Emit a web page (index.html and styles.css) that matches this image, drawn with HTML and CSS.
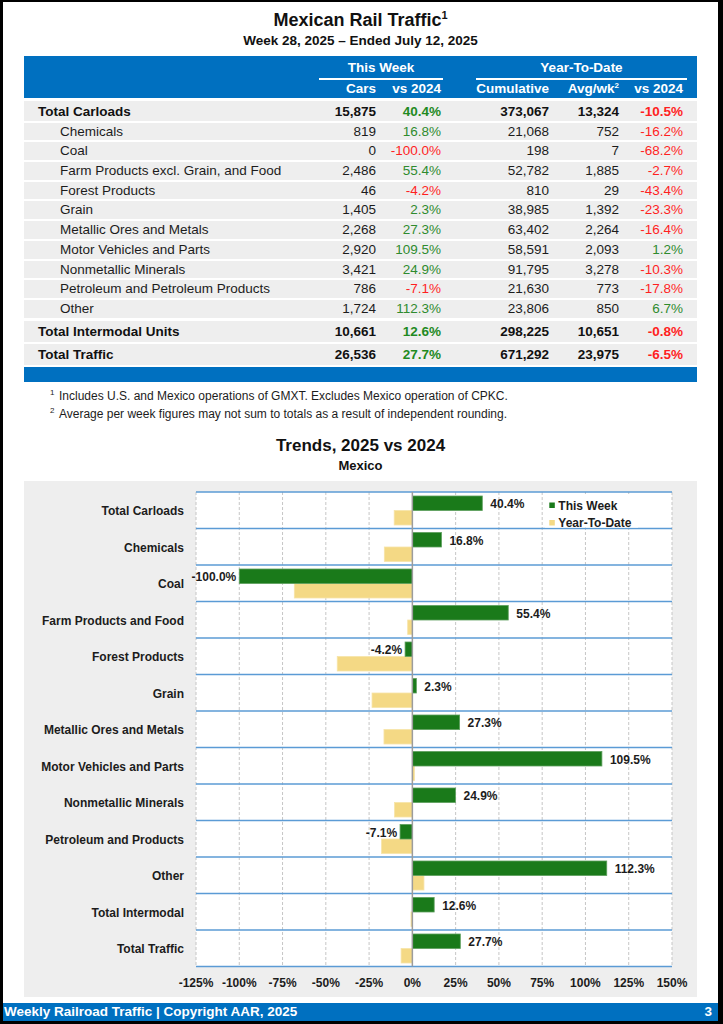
FILE: index.html
```html
<!DOCTYPE html>
<html lang="en">
<head>
<meta charset="utf-8">
<title>Mexican Rail Traffic</title>
<link rel="stylesheet" href="styles.css">
</head>
<body>
<div class="page">
  <h1 class="title">Mexican Rail Traffic<sup>1</sup></h1>
  <div class="subtitle">Week 28, 2025 – Ended July 12, 2025</div>

  <div class="tbl">
    <div class="thead">
      <div></div>
      <div class="grp tw">This Week</div>
      <div class="grp ytd">Year-To-Date</div>
      <div></div>
      <div class="hc">Cars</div>
      <div class="hc">vs 2024</div>
      <div class="hc">Cumulative</div>
      <div class="hc">Avg/wk<sup>2</sup></div>
      <div class="hc">vs 2024</div>
    </div>
    <div class="tbody">
      <div class="row total first"><div class="lbl">Total Carloads</div><div>15,875</div><div class="pos">40.4%</div><div>373,067</div><div>13,324</div><div class="neg">-10.5%</div></div>
      <div class="row sub"><div class="lbl">Chemicals</div><div>819</div><div class="pos">16.8%</div><div>21,068</div><div>752</div><div class="neg">-16.2%</div></div>
      <div class="row sub"><div class="lbl">Coal</div><div>0</div><div class="neg">-100.0%</div><div>198</div><div>7</div><div class="neg">-68.2%</div></div>
      <div class="row sub"><div class="lbl">Farm Products excl. Grain, and Food</div><div>2,486</div><div class="pos">55.4%</div><div>52,782</div><div>1,885</div><div class="neg">-2.7%</div></div>
      <div class="row sub"><div class="lbl">Forest Products</div><div>46</div><div class="neg">-4.2%</div><div>810</div><div>29</div><div class="neg">-43.4%</div></div>
      <div class="row sub"><div class="lbl">Grain</div><div>1,405</div><div class="pos">2.3%</div><div>38,985</div><div>1,392</div><div class="neg">-23.3%</div></div>
      <div class="row sub"><div class="lbl">Metallic Ores and Metals</div><div>2,268</div><div class="pos">27.3%</div><div>63,402</div><div>2,264</div><div class="neg">-16.4%</div></div>
      <div class="row sub"><div class="lbl">Motor Vehicles and Parts</div><div>2,920</div><div class="pos">109.5%</div><div>58,591</div><div>2,093</div><div class="pos">1.2%</div></div>
      <div class="row sub"><div class="lbl">Nonmetallic Minerals</div><div>3,421</div><div class="pos">24.9%</div><div>91,795</div><div>3,278</div><div class="neg">-10.3%</div></div>
      <div class="row sub"><div class="lbl">Petroleum and Petroleum Products</div><div>786</div><div class="neg">-7.1%</div><div>21,630</div><div>773</div><div class="neg">-17.8%</div></div>
      <div class="row sub"><div class="lbl">Other</div><div>1,724</div><div class="pos">112.3%</div><div>23,806</div><div>850</div><div class="pos">6.7%</div></div>
      <div class="row total big inter"><div class="lbl">Total Intermodal Units</div><div>10,661</div><div class="pos">12.6%</div><div>298,225</div><div>10,651</div><div class="neg">-0.8%</div></div>
      <div class="row total big"><div class="lbl">Total Traffic</div><div>26,536</div><div class="pos">27.7%</div><div>671,292</div><div>23,975</div><div class="neg">-6.5%</div></div>
    </div>
    <div class="tfoot"></div>
  </div>

  <div class="notes">
    <p><sup>1</sup>Includes U.S. and Mexico operations of GMXT. Excludes Mexico operation of CPKC.</p>
    <p><sup>2</sup>Average per week figures may not sum to totals as a result of independent rounding.</p>
  </div>

  <h2 class="ctitle">Trends, 2025 vs 2024</h2>
  <div class="csub">Mexico</div>

  <div class="chart">
    <svg width="673" height="516" viewBox="0 0 673 516">
      <rect class="plot" x="172" y="11" width="476" height="474.5"/>
      <g class="grid">
        <line x1="172" y1="11" x2="172" y2="485.5"/>
        <line x1="215.27" y1="11" x2="215.27" y2="485.5"/>
        <line x1="258.55" y1="11" x2="258.55" y2="485.5"/>
        <line x1="301.82" y1="11" x2="301.82" y2="485.5"/>
        <line x1="345.09" y1="11" x2="345.09" y2="485.5"/>
        <line x1="431.64" y1="11" x2="431.64" y2="485.5"/>
        <line x1="474.91" y1="11" x2="474.91" y2="485.5"/>
        <line x1="518.18" y1="11" x2="518.18" y2="485.5"/>
        <line x1="561.45" y1="11" x2="561.45" y2="485.5"/>
        <line x1="604.73" y1="11" x2="604.73" y2="485.5"/>
        <line x1="648" y1="11" x2="648" y2="485.5"/>
      </g>
      <g class="bands">
        <line x1="172" y1="11" x2="648" y2="11"/>
        <line x1="172" y1="47.5" x2="648" y2="47.5"/>
        <line x1="172" y1="84" x2="648" y2="84"/>
        <line x1="172" y1="120.5" x2="648" y2="120.5"/>
        <line x1="172" y1="157" x2="648" y2="157"/>
        <line x1="172" y1="193.5" x2="648" y2="193.5"/>
        <line x1="172" y1="230" x2="648" y2="230"/>
        <line x1="172" y1="266.5" x2="648" y2="266.5"/>
        <line x1="172" y1="303" x2="648" y2="303"/>
        <line x1="172" y1="339.5" x2="648" y2="339.5"/>
        <line x1="172" y1="376" x2="648" y2="376"/>
        <line x1="172" y1="412.5" x2="648" y2="412.5"/>
        <line x1="172" y1="449" x2="648" y2="449"/>
        <line x1="172" y1="485.5" x2="648" y2="485.5"/>
      </g>
      <g class="ytdbar">
        <rect x="370.19" y="29.5" width="18.17" height="14.5"/>
        <rect x="360.32" y="66" width="28.04" height="14.5"/>
        <rect x="270.31" y="102.5" width="118.05" height="14.5"/>
        <rect x="383.69" y="139" width="4.67" height="14.5"/>
        <rect x="313.24" y="175.5" width="75.12" height="14.5"/>
        <rect x="348.03" y="212" width="40.33" height="14.5"/>
        <rect x="359.97" y="248.5" width="28.39" height="14.5"/>
        <rect x="388.36" y="285" width="2.08" height="14.5"/>
        <rect x="370.53" y="321.5" width="17.83" height="14.5"/>
        <rect x="357.55" y="358" width="30.81" height="14.5"/>
        <rect x="388.36" y="394.5" width="11.6" height="14.5"/>
        <rect x="386.98" y="431" width="1.38" height="14.5"/>
        <rect x="377.11" y="467.5" width="11.25" height="14.5"/>
      </g>
      <g class="twbar">
        <rect x="388.36" y="15" width="69.93" height="14.5"/>
        <rect x="388.36" y="51.5" width="29.08" height="14.5"/>
        <rect x="215.27" y="88" width="173.09" height="14.5"/>
        <rect x="388.36" y="124.5" width="95.89" height="14.5"/>
        <rect x="381.09" y="161" width="7.27" height="14.5"/>
        <rect x="388.36" y="197.5" width="3.98" height="14.5"/>
        <rect x="388.36" y="234" width="47.25" height="14.5"/>
        <rect x="388.36" y="270.5" width="189.53" height="14.5"/>
        <rect x="388.36" y="307" width="43.1" height="14.5"/>
        <rect x="376.07" y="343.5" width="12.29" height="14.5"/>
        <rect x="388.36" y="380" width="194.38" height="14.5"/>
        <rect x="388.36" y="416.5" width="21.81" height="14.5"/>
        <rect x="388.36" y="453" width="47.95" height="14.5"/>
      </g>
      <line class="zero" x1="388.36" y1="11" x2="388.36" y2="485.5"/>
      <g class="vals">
        <text x="466.3" y="27.45">40.4%</text>
        <text x="425.4" y="63.95">16.8%</text>
        <text class="end" x="212.3" y="100.45">-100.0%</text>
        <text x="492.3" y="136.95">55.4%</text>
        <text class="end" x="378.1" y="173.45">-4.2%</text>
        <text x="400.3" y="209.95">2.3%</text>
        <text x="443.6" y="246.45">27.3%</text>
        <text x="585.9" y="282.95">109.5%</text>
        <text x="439.5" y="319.45">24.9%</text>
        <text class="end" x="373.1" y="355.95">-7.1%</text>
        <text x="590.7" y="392.45">112.3%</text>
        <text x="418.2" y="428.95">12.6%</text>
        <text x="444.3" y="465.45">27.7%</text>
      </g>
      <g class="cats">
        <text x="160" y="34.05">Total Carloads</text>
        <text x="160" y="70.55">Chemicals</text>
        <text x="160" y="107.05">Coal</text>
        <text x="160" y="143.55">Farm Products and Food</text>
        <text x="160" y="180.05">Forest Products</text>
        <text x="160" y="216.55">Grain</text>
        <text x="160" y="253.05">Metallic Ores and Metals</text>
        <text x="160" y="289.55">Motor Vehicles and Parts</text>
        <text x="160" y="326.05">Nonmetallic Minerals</text>
        <text x="160" y="362.55">Petroleum and Products</text>
        <text x="160" y="399.05">Other</text>
        <text x="160" y="435.55">Total Intermodal</text>
        <text x="160" y="472.05">Total Traffic</text>
      </g>
      <g class="axis">
        <text x="172" y="505.8">-125%</text>
        <text x="215.27" y="505.8">-100%</text>
        <text x="258.55" y="505.8">-75%</text>
        <text x="301.82" y="505.8">-50%</text>
        <text x="345.09" y="505.8">-25%</text>
        <text x="388.36" y="505.8">0%</text>
        <text x="431.64" y="505.8">25%</text>
        <text x="474.91" y="505.8">50%</text>
        <text x="518.18" y="505.8">75%</text>
        <text x="561.45" y="505.8">100%</text>
        <text x="604.73" y="505.8">125%</text>
        <text x="648" y="505.8">150%</text>
      </g>
      <g class="legend">
        <rect class="lbg" x="521" y="13" width="93" height="33.5"/>
        <rect class="lg-tw" x="525.3" y="21.5" width="5.5" height="5.5"/>
        <text x="534.3" y="28.5">This Week</text>
        <rect class="lg-ytd" x="525.3" y="39" width="5.5" height="5.5"/>
        <text x="534.3" y="46">Year-To-Date</text>
      </g>
    </svg>
  </div>

  <div class="footer"><span>Weekly Railroad Traffic | Copyright AAR, 2025</span><span>3</span></div>
</div>
</body>
</html>
```

FILE: styles.css
```css
html {
  background: #000;
}

body {
  margin: 0;
  font-family: "Liberation Sans", Arial, sans-serif;
  color: #1c1c1c;
}

.page {
  margin: 2px 5px 0 3px;
  height: 1019px;
  background: #fff;
  display: flex;
  flex-direction: column;
}

.title {
  margin: 0;
  padding-top: 8px;
  font-size: 18px;
  line-height: 21px;
  font-weight: bold;
  text-align: center;
  color: #111;
}

.title sup {
  font-size: 11px;
  line-height: 0;
  vertical-align: 7px;
}

.subtitle {
  margin-top: 2px;
  font-size: 13.5px;
  line-height: 16px;
  font-weight: bold;
  text-align: center;
  color: #111;
}

/* ---------- table ---------- */
.tbl {
  margin: 7px 21px 0;
}

.thead {
  background: #0070c0;
  color: #fff;
  font-weight: bold;
  font-size: 13.5px;
  line-height: 16px;
  display: grid;
  grid-template-columns: 296px 56px 65px 108px 70px 64px;
  row-gap: 1px;
  padding: 4px 0 1px;
}

.grp {
  text-align: center;
  padding-bottom: 2px;
  border-bottom: 2px solid #fff;
}

.tw {
  grid-column: span 2;
  margin-left: -1px;
  margin-right: -2px;
}

.ytd {
  grid-column: span 3;
  margin-left: 35px;
  margin-right: -4px;
}

.hc {
  text-align: right;
}

.hc sup {
  font-size: 8px;
  line-height: 0;
  vertical-align: 5px;
}

.tbody {
  display: flex;
  flex-direction: column;
  gap: 2px;
  margin-top: 3px;
}

.row {
  display: grid;
  grid-template-columns: 296px 56px 65px 108px 70px 64px;
  background: #eeeeee;
  font-size: 13.5px;
  text-align: right;
}

.row .lbl {
  text-align: left;
}

.row.sub {
  height: 17.7px;
  line-height: 17.7px;
}

.row.sub .lbl {
  padding-left: 36px;
}

.row.total {
  font-weight: bold;
  color: #111;
}

.row.total .lbl {
  padding-left: 14px;
}

.row.first {
  height: 17.7px;
  line-height: 17.7px;
  padding-top: 2px;
}

.row.big {
  height: 21px;
  line-height: 21px;
}

.row.inter {
  margin-top: 1.3px;
}

.pos {
  color: #2e8b2e;
}

.neg {
  color: #ff1f1f;
}

.row.total .pos {
  color: #1f8a1f;
}

.tfoot {
  margin-top: 2px;
  height: 15.5px;
  background: #0070c0;
}

/* ---------- notes ---------- */
.notes {
  margin-top: 4.3px;
  padding-left: 47px;
  font-size: 12px;
  line-height: 18px;
  color: #1c1c1c;
}

.notes p {
  margin: 0;
}

.notes sup {
  font-size: 8px;
  line-height: 0;
  vertical-align: 5px;
  margin-right: 4.5px;
}

/* ---------- chart ---------- */
.ctitle {
  margin: 13.3px 0 0;
  font-size: 17px;
  line-height: 20px;
  font-weight: bold;
  text-align: center;
  color: #111;
}

.csub {
  margin-top: 2.1px;
  font-size: 13px;
  line-height: 16px;
  font-weight: bold;
  text-align: center;
  color: #111;
}

.chart {
  margin: 7.3px 21px 0;
  height: 516px;
  background: #eeeeee;
}

.chart svg {
  display: block;
  font-family: "Liberation Sans", Arial, sans-serif;
}

.chart .plot {
  fill: #fff;
}

.chart .grid line {
  stroke: #c6c6c6;
  stroke-width: 1;
  stroke-dasharray: 3 2;
}

.chart .bands line {
  stroke: #5b9bd5;
  stroke-width: 1.6;
}

.chart .zero {
  stroke: #9c9c9c;
  stroke-width: 1.5;
}

.chart .twbar rect {
  fill: #1a7a1a;
  stroke: #5c9e5c;
  stroke-width: 0.8;
}

.chart .ytdbar rect {
  fill: #f4d985;
  stroke: #f7e4a8;
  stroke-width: 0.8;
}

.chart text {
  font-size: 12px;
  font-weight: bold;
  fill: #1c1c1c;
}

.chart .vals text.end {
  text-anchor: end;
}

.chart .cats text {
  text-anchor: end;
}

.chart .axis text {
  text-anchor: middle;
}

.chart .lbg {
  fill: #fff;
}

.chart .lg-tw {
  fill: #1a7a1a;
}

.chart .lg-ytd {
  fill: #f4d985;
}

/* ---------- footer ---------- */
.footer {
  margin-top: auto;
  height: 18px;
  background: #0070c0;
  color: #fff;
  font-weight: bold;
  font-size: 13.5px;
  line-height: 18px;
  display: flex;
  justify-content: space-between;
  padding: 0 6px 0 1px;
}
```
